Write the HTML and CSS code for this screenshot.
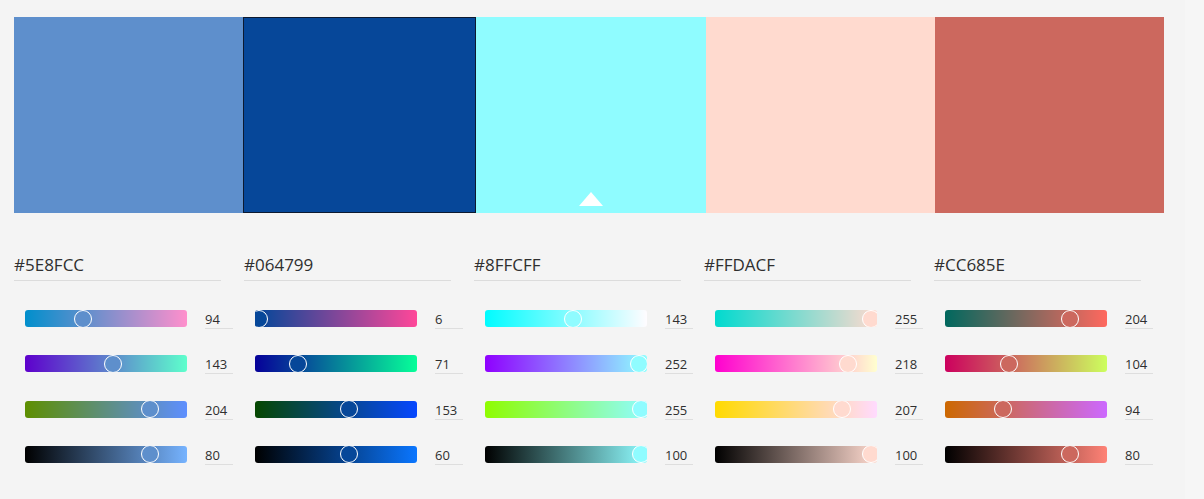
FILE: index.html
```html
<!DOCTYPE html>
<html lang="en">
<head>
<meta charset="utf-8">
<title>Color Wheel</title>
<link rel="stylesheet" href="styles.css">
</head>
<body>
<div class="page">
  <main class="main">
    <div class="swatches">
      <div class="swatch" style="background:#5E8FCC"></div>
      <div class="swatch swatch-selected" style="background:#064799"></div>
      <div class="swatch" style="background:#8FFCFF"><span class="caret"></span></div>
      <div class="swatch" style="background:#FFDACF"></div>
      <div class="swatch" style="background:#CC685E"></div>
    </div>

    <div class="editors">
      <section class="editor">
        <div class="hex">#5E8FCC</div>
        <div class="sliders">
          <div class="row"><div class="track" style="background:linear-gradient(to right, rgb(0,143,204), rgb(255,143,204))"><span class="thumb" style="left:57.5px;background:#5E8FCC"></span></div><span class="num">94</span></div>
          <div class="row"><div class="track" style="background:linear-gradient(to right, rgb(94,0,204), rgb(94,255,204))"><span class="thumb" style="left:87.5px;background:#5E8FCC"></span></div><span class="num">143</span></div>
          <div class="row"><div class="track" style="background:linear-gradient(to right, rgb(94,143,0), rgb(94,143,255))"><span class="thumb" style="left:124.8px;background:#5E8FCC"></span></div><span class="num">204</span></div>
          <div class="row"><div class="track" style="background:linear-gradient(to right, #000, rgb(118,179,255))"><span class="thumb" style="left:124.8px;background:#5E8FCC"></span></div><span class="num">80</span></div>
        </div>
      </section>

      <section class="editor">
        <div class="hex">#064799</div>
        <div class="sliders">
          <div class="row"><div class="track" style="background:linear-gradient(to right, rgb(0,71,153), rgb(255,71,153))"><span class="thumb" style="left:3.7px;background:#064799"></span></div><span class="num">6</span></div>
          <div class="row"><div class="track" style="background:linear-gradient(to right, rgb(6,0,153), rgb(6,255,153))"><span class="thumb" style="left:43.4px;background:#064799"></span></div><span class="num">71</span></div>
          <div class="row"><div class="track" style="background:linear-gradient(to right, rgb(6,71,0), rgb(6,71,255))"><span class="thumb" style="left:93.6px;background:#064799"></span></div><span class="num">153</span></div>
          <div class="row"><div class="track" style="background:linear-gradient(to right, #000, rgb(10,118,255))"><span class="thumb" style="left:93.6px;background:#064799"></span></div><span class="num">60</span></div>
        </div>
      </section>

      <section class="editor">
        <div class="hex">#8FFCFF</div>
        <div class="sliders">
          <div class="row"><div class="track" style="background:linear-gradient(to right, rgb(0,252,255), rgb(255,252,255))"><span class="thumb" style="left:87.5px;background:#8FFCFF"></span></div><span class="num">143</span></div>
          <div class="row"><div class="track" style="background:linear-gradient(to right, rgb(143,0,255), rgb(143,255,255))"><span class="thumb" style="left:154.2px;background:#8FFCFF"></span></div><span class="num">252</span></div>
          <div class="row"><div class="track" style="background:linear-gradient(to right, rgb(143,252,0), rgb(143,252,255))"><span class="thumb" style="left:156px;background:#8FFCFF"></span></div><span class="num">255</span></div>
          <div class="row"><div class="track" style="background:linear-gradient(to right, #000, rgb(143,252,255))"><span class="thumb" style="left:156px;background:#8FFCFF"></span></div><span class="num">100</span></div>
        </div>
      </section>

      <section class="editor">
        <div class="hex">#FFDACF</div>
        <div class="sliders">
          <div class="row"><div class="track" style="background:linear-gradient(to right, rgb(0,218,207), rgb(255,218,207))"><span class="thumb" style="left:156px;background:#FFDACF"></span></div><span class="num">255</span></div>
          <div class="row"><div class="track" style="background:linear-gradient(to right, rgb(255,0,207), rgb(255,255,207))"><span class="thumb" style="left:133.4px;background:#FFDACF"></span></div><span class="num">218</span></div>
          <div class="row"><div class="track" style="background:linear-gradient(to right, rgb(255,218,0), rgb(255,218,255))"><span class="thumb" style="left:126.6px;background:#FFDACF"></span></div><span class="num">207</span></div>
          <div class="row"><div class="track" style="background:linear-gradient(to right, #000, rgb(255,218,207))"><span class="thumb" style="left:156px;background:#FFDACF"></span></div><span class="num">100</span></div>
        </div>
      </section>

      <section class="editor">
        <div class="hex">#CC685E</div>
        <div class="sliders">
          <div class="row"><div class="track" style="background:linear-gradient(to right, rgb(0,104,94), rgb(255,104,94))"><span class="thumb" style="left:124.8px;background:#CC685E"></span></div><span class="num">204</span></div>
          <div class="row"><div class="track" style="background:linear-gradient(to right, rgb(204,0,94), rgb(204,255,94))"><span class="thumb" style="left:63.6px;background:#CC685E"></span></div><span class="num">104</span></div>
          <div class="row"><div class="track" style="background:linear-gradient(to right, rgb(204,104,0), rgb(204,104,255))"><span class="thumb" style="left:57.5px;background:#CC685E"></span></div><span class="num">94</span></div>
          <div class="row"><div class="track" style="background:linear-gradient(to right, #000, rgb(255,130,118))"><span class="thumb" style="left:124.8px;background:#CC685E"></span></div><span class="num">80</span></div>
        </div>
      </section>
    </div>
  </main>
  <aside class="strip"></aside>
</div>
</body>
</html>
```

FILE: styles.css
```css
* { box-sizing: border-box; }

html, body {
  margin: 0;
  padding: 0;
  height: 100%;
}

body {
  background: #f4f4f4;
  font-family: "Open Sans", "Noto Sans", "Liberation Sans", sans-serif;
  color: #333333;
  overflow: hidden;
}

.page {
  display: flex;
  height: 499px;
}

.main {
  width: 1185px;
  padding: 17px 0 0 14px;
}

.strip {
  flex: 1;
  background: #f6f6f6;
}

.swatches {
  display: flex;
  width: 1150px;
  height: 196px;
}

.swatch {
  flex: 1 1 0;
  position: relative;
}

.swatch-selected {
  flex: 0 0 233px;
  border: 1px solid #0d1a30;
}

.caret {
  position: absolute;
  left: 50%;
  bottom: 7px;
  width: 0;
  height: 0;
  margin-left: -12px;
  border-left: 12px solid transparent;
  border-right: 12px solid transparent;
  border-bottom: 14px solid #ffffff;
}

.editors {
  display: grid;
  grid-template-columns: repeat(5, 230px);
  margin-top: 37px;
}

.hex {
  width: 207px;
  height: 31px;
  border-bottom: 1px solid #dcdcdc;
  display: flex;
  align-items: center;
  font-size: 17px;
  color: #2f2f2f;
  padding-bottom: 1px;
}

.sliders {
  display: flex;
  flex-direction: column;
  gap: 26.3px;
  margin-top: 29px;
  padding-left: 11px;
}

.row {
  display: flex;
  align-items: flex-start;
  gap: 18px;
  height: 19px;
}

.track {
  position: relative;
  width: 162px;
  height: 17px;
  border-radius: 3px;
  overflow: hidden;
}

.thumb {
  position: absolute;
  top: -0.5px;
  width: 18px;
  height: 18px;
  margin-left: -9px;
  border-radius: 50%;
  border: 1.5px solid #ffffff;
}

.num {
  width: 28px;
  height: 19px;
  line-height: 19px;
  font-size: 13px;
  color: #2f2f2f;
  border-bottom: 1px solid #dedede;
}
```
